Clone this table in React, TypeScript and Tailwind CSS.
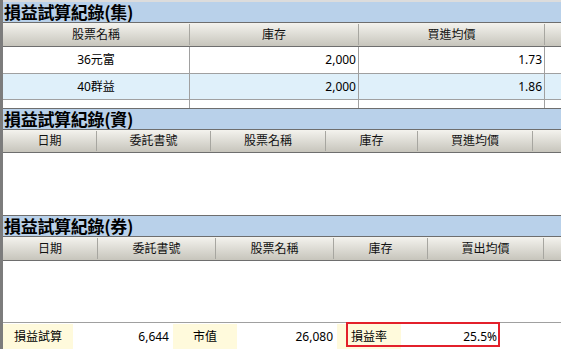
import React from "react";

const FONT = "font-['Noto_Sans','Noto_Sans_CJK_TC',sans-serif]";

function Title({ text }: { text: string }) {
  return (
    <div className="h-[20px] bg-[#b9d1ea] pl-[1px] text-[17px] leading-[20px] font-bold text-black font-['Noto_Sans_CJK_TC',sans-serif] tracking-[-0.3px]">
      {text}
    </div>
  );
}

function Sep() {
  return <div className="w-px shrink-0 my-[1px] bg-[#a7a6a0]" />;
}

function HeadCell({ w, label }: { w: string; label: string }) {
  return (
    <div className={`${w} shrink-0 flex items-center justify-center text-[12px] text-[#111]`}>
      {label}
    </div>
  );
}

function Header({ cols }: { cols: { w: string; label: string }[] }) {
  return (
    <div className="h-[25px] flex border-y border-[#6e6e6e] bg-gradient-to-b from-[#f4f3ee] to-[#c7c5bc]">
      {cols.map((c, i) => (
        <React.Fragment key={i}>
          <HeadCell w={c.w} label={c.label} />
          <Sep />
        </React.Fragment>
      ))}
      <div className="flex-1" />
    </div>
  );
}

function DataRow({
  h,
  bg,
  name,
  qty,
  price,
}: {
  h: string;
  bg: string;
  name: string;
  qty: string;
  price: string;
}) {
  return (
    <div className={`${h} ${bg} flex border-b border-[#a0a0a0] text-[12px] text-black`}>
      <div className="w-[186px] shrink-0 flex items-center justify-center">{name}</div>
      <div className="w-px shrink-0 bg-[#a0a0a0]" />
      <div className="w-[168px] shrink-0 flex items-center justify-end pr-[2px]">{qty}</div>
      <div className="w-px shrink-0 bg-[#a0a0a0]" />
      <div className="w-[185px] shrink-0 flex items-center justify-end pr-[2px]">{price}</div>
      <div className="w-px shrink-0 bg-[#a0a0a0]" />
      <div className="flex-1" />
    </div>
  );
}

export default function App() {
  return (
    <div className={`w-[561px] h-[349px] overflow-hidden bg-white ${FONT}`}>
      <div className="h-full flex flex-col border-l-[3px] border-[#7c7c7c]">
        <div className="h-[2px] shrink-0 bg-[#dcdcdc]" />
        {/* Section 1 */}
        <Title text="損益試算紀錄(集)" />
        <Header
          cols={[
            { w: "w-[186px]", label: "股票名稱" },
            { w: "w-[168px]", label: "庫存" },
            { w: "w-[185px]", label: "買進均價" },
          ]}
        />
        <DataRow h="h-[27px]" bg="bg-white" name="36元富" qty="2,000" price="1.73" />
        <DataRow h="h-[26px]" bg="bg-[#dff0fa]" name="40群益" qty="2,000" price="1.86" />
        <div className="h-[8px] flex bg-white">
          <div className="w-[186px] shrink-0" />
          <div className="w-px shrink-0 bg-[#a0a0a0]" />
          <div className="w-[168px] shrink-0" />
          <div className="w-px shrink-0 bg-[#a0a0a0]" />
          <div className="w-[185px] shrink-0" />
          <div className="w-px shrink-0 bg-[#a0a0a0]" />
          <div className="flex-1" />
        </div>

        {/* Section 2 */}
        <div className="border-t border-[#6e6e6e]">
          <Title text="損益試算紀錄(資)" />
        </div>
        <div className="h-[24px] flex border-y border-[#6e6e6e] bg-gradient-to-b from-[#f4f3ee] to-[#c7c5bc]">
          <HeadCell w="w-[93px]" label="日期" />
          <Sep />
          <HeadCell w="w-[113px]" label="委託書號" />
          <Sep />
          <HeadCell w="w-[114px]" label="股票名稱" />
          <Sep />
          <HeadCell w="w-[91px]" label="庫存" />
          <Sep />
          <HeadCell w="w-[114px]" label="買進均價" />
          <Sep />
          <div className="flex-1" />
        </div>
        <div className="h-[62px] bg-white" />

        {/* Section 3 */}
        <div className="border-t border-[#6e6e6e]">
          <Title text="損益試算紀錄(券)" />
        </div>
        <div className="h-[25px] flex border-y border-[#6e6e6e] bg-gradient-to-b from-[#f4f3ee] to-[#c7c5bc]">
          <HeadCell w="w-[94px]" label="日期" />
          <Sep />
          <HeadCell w="w-[117px]" label="委託書號" />
          <Sep />
          <HeadCell w="w-[117px]" label="股票名稱" />
          <Sep />
          <HeadCell w="w-[93px]" label="庫存" />
          <Sep />
          <HeadCell w="w-[115px]" label="賣出均價" />
          <Sep />
          <div className="flex-1" />
        </div>
        <div className="h-[61px] bg-white" />

        {/* Summary */}
        <div className="relative h-[27px] shrink-0 border-t border-[#a0a0a0] pt-[1px] bg-white flex text-[12px] text-black">
          <div className="w-[70px] shrink-0 bg-[#fffadc] flex items-center justify-center">損益試算</div>
          <div className="w-[100px] shrink-0 flex items-center justify-end pr-[4px]">6,644</div>
          <div className="w-[64px] shrink-0 bg-[#fffadc] flex items-center justify-center">市值</div>
          <div className="w-[100px] shrink-0 flex items-center justify-end pr-[4px]">26,080</div>
          <div className="w-[64px] shrink-0 bg-[#fffadc] flex items-center justify-center">損益率</div>
          <div className="w-[100px] shrink-0 flex items-center justify-end pr-[4px]">25.5%</div>
          <div className="flex-1" />
          <div className="absolute left-[343px] top-[-1px] w-[154px] h-[25px] border-2 border-[#e3202b]" />
        </div>
      </div>
    </div>
  );
}
